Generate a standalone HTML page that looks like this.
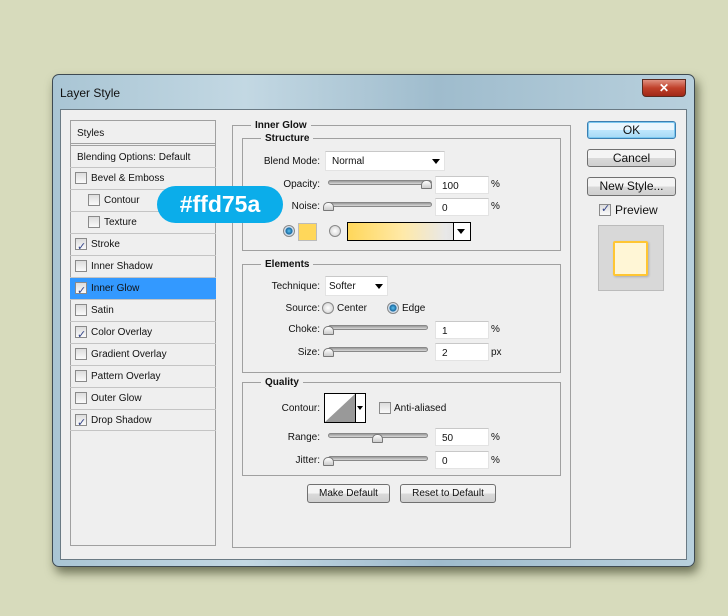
<!DOCTYPE html>
<html><head><style>
body{margin:0;width:728px;height:616px;background:#d7dbbc;position:relative;overflow:hidden;font-family:"Liberation Sans",Tahoma,sans-serif;font-size:10px;color:#111}
div,span{position:absolute;box-sizing:border-box}
.frame{left:52px;top:74px;width:643px;height:493px;border-radius:7px;background:linear-gradient(90deg,#a9c5d4,#c3d8e3 30%,#9fbccd 60%,#b8d0dd);border:1px solid #3e4a52;box-shadow:3px 6px 10px rgba(40,45,20,.6)}
.client{left:60px;top:109px;width:627px;height:451px;background:#efefef;border:1px solid #6a7a84}
.t{white-space:nowrap;line-height:15px}
.r{text-align:right}
.box{border:1px solid #a0a0a0}
.in{background:#fff;border:1px solid #e3e3e3;border-top-color:#c8c8c8;padding-left:6px;line-height:19px}
.sl{height:5px;border-radius:3px;background:linear-gradient(#9a9a9a,#d8d8d8);border:1px solid #888}
.th{width:11px;height:9px;background:linear-gradient(#fff,#ccc);border:1px solid #777;border-radius:5px 5px 1px 1px}
.cb{width:12px;height:12px;border:1px solid #8a8a8a;background:linear-gradient(#ddd,#fafafa)}
.rd{width:12px;height:12px;border-radius:50%;border:1px solid #888;background:radial-gradient(#fff,#ccc)}
.rd.on{background:radial-gradient(#5ac0f0 0,#1a6aa0 45%,#cde 55%,#eee)}
.btn{border:1px solid #707070;border-radius:3px;background:linear-gradient(#f4f4f4 50%,#dadada 50%,#cfcfcf);text-align:center;font-size:11px;line-height:17px}
.lab{background:#efefef;font-weight:bold;padding:0 4px}
.row{left:70px;width:146px;height:22px;border-top:1px solid #c4c4c4;padding-left:21px;line-height:22px}
.row .cb{left:5px;top:4px}
.ck::after{content:"✓";position:absolute;left:1px;top:-3px;font-size:11px;color:#334488}
.arr{width:0;height:0;border-left:4px solid transparent;border-right:4px solid transparent;border-top:5px solid #000}
</style></head><body>
<div class="frame"></div>
<div class="t" style="left:60px;top:86px;font-size:12px;line-height:15px">Layer Style</div>
<div style="left:642px;top:79px;width:44px;height:18px;border-radius:0 0 4px 4px;background:linear-gradient(#e09080,#c0402a 50%,#a02818);border:1px solid #5a2a20;color:#fff;text-align:center;font-weight:bold;font-size:12px;line-height:16px">✕</div>
<div class="client"></div>

<div class="box" style="left:70px;top:120px;width:146px;height:426px;background:#efefef"></div>
<div class="t" style="left:77px;top:126px">Styles</div>
<div style="left:71px;top:143px;width:144px;height:3px;border-top:1px solid #a0a0a0;border-bottom:1px solid #a0a0a0"></div>
<div class="t" style="left:77px;top:150px">Blending Options: Default</div>
<div class="row" style="top:167px"><span class="cb"></span>Bevel &amp; Emboss</div>
<div class="row" style="top:189px;padding-left:34px"><span class="cb" style="left:18px"></span>Contour</div>
<div class="row" style="top:211px;padding-left:34px"><span class="cb" style="left:18px"></span>Texture</div>
<div class="row" style="top:233px"><span class="cb ck"></span>Stroke</div>
<div class="row" style="top:255px"><span class="cb"></span>Inner Shadow</div>
<div class="row" style="top:277px;background:#3399ff"><span class="cb ck"></span>Inner Glow</div>
<div class="row" style="top:299px"><span class="cb"></span>Satin</div>
<div class="row" style="top:321px"><span class="cb ck"></span>Color Overlay</div>
<div class="row" style="top:343px"><span class="cb"></span>Gradient Overlay</div>
<div class="row" style="top:365px"><span class="cb"></span>Pattern Overlay</div>
<div class="row" style="top:387px"><span class="cb"></span>Outer Glow</div>
<div class="row" style="top:409px;border-bottom:1px solid #c4c4c4"><span class="cb ck"></span>Drop Shadow</div>

<div class="box" style="left:232px;top:125px;width:339px;height:423px"></div>
<div class="t lab" style="left:251px;top:118px">Inner Glow</div>
<div class="box" style="left:242px;top:138px;width:319px;height:113px"></div>
<div class="t lab" style="left:261px;top:131px">Structure</div>
<div class="t r" style="left:240px;width:80px;top:154px">Blend Mode:</div>
<div class="in" style="left:325px;top:151px;width:120px;height:20px;line-height:19px">Normal</div><div class="arr" style="left:432px;top:159px"></div>
<div class="t r" style="left:240px;width:80px;top:177px">Opacity:</div>
<div class="sl" style="left:328px;top:180px;width:104px"></div><div class="th" style="left:421px;top:180px"></div>
<div class="in" style="left:435px;top:176px;width:54px;height:18px">100</div><div class="t" style="left:491px;top:177px">%</div>
<div class="t r" style="left:240px;width:80px;top:199px">Noise:</div>
<div class="sl" style="left:328px;top:202px;width:104px"></div><div class="th" style="left:323px;top:202px"></div>
<div class="in" style="left:435px;top:198px;width:54px;height:18px">0</div><div class="t" style="left:491px;top:199px">%</div>
<div class="rd on" style="left:283px;top:225px"></div>
<div style="left:298px;top:223px;width:19px;height:18px;background:#ffd75a;border:1px solid #bbb"></div>
<div class="rd" style="left:329px;top:225px"></div>
<div style="left:347px;top:222px;width:124px;height:19px;border:1px solid #000;background:linear-gradient(90deg,#ffd75a,#ffe9a8 45%,#e8e8e8 80%,#ddd)"></div>
<div style="left:453px;top:223px;width:17px;height:17px;border-left:1px solid #000;background:#fff"></div><div class="arr" style="left:457px;top:229px"></div>

<div class="box" style="left:242px;top:264px;width:319px;height:109px"></div>
<div class="t lab" style="left:261px;top:257px">Elements</div>
<div class="t r" style="left:240px;width:80px;top:279px">Technique:</div>
<div class="in" style="left:325px;top:276px;width:63px;height:20px;line-height:19px;padding-left:3px">Softer</div><div class="arr" style="left:375px;top:284px"></div>
<div class="t r" style="left:240px;width:80px;top:301px">Source:</div>
<div class="rd" style="left:322px;top:302px"></div><div class="t" style="left:337px;top:301px">Center</div>
<div class="rd on" style="left:387px;top:302px"></div><div class="t" style="left:402px;top:301px">Edge</div>
<div class="t r" style="left:240px;width:80px;top:322px">Choke:</div>
<div class="sl" style="left:328px;top:325px;width:100px"></div><div class="th" style="left:323px;top:326px"></div>
<div class="in" style="left:435px;top:321px;width:54px;height:18px">1</div><div class="t" style="left:491px;top:322px">%</div>
<div class="t r" style="left:240px;width:80px;top:345px">Size:</div>
<div class="sl" style="left:328px;top:347px;width:100px"></div><div class="th" style="left:323px;top:348px"></div>
<div class="in" style="left:435px;top:343px;width:54px;height:18px">2</div><div class="t" style="left:491px;top:345px">px</div>

<div class="box" style="left:242px;top:382px;width:319px;height:94px"></div>
<div class="t lab" style="left:261px;top:375px">Quality</div>
<div class="t r" style="left:240px;width:80px;top:401px">Contour:</div>
<div style="left:324px;top:393px;width:42px;height:30px;border:1px solid #000;background:#fff"></div>
<svg style="position:absolute;left:325px;top:394px" width="30" height="28"><polygon points="0,28 30,0 30,28" fill="#999"/></svg>
<div style="left:355px;top:394px;width:1px;height:28px;background:#000"></div>
<div class="arr" style="left:357px;top:406px;border-left-width:3px;border-right-width:3px;border-top-width:4px"></div>
<div class="cb" style="left:379px;top:402px"></div><div class="t" style="left:394px;top:401px">Anti-aliased</div>
<div class="t r" style="left:240px;width:80px;top:430px">Range:</div>
<div class="sl" style="left:328px;top:433px;width:100px"></div><div class="th" style="left:372px;top:434px"></div>
<div class="in" style="left:435px;top:428px;width:54px;height:18px">50</div><div class="t" style="left:491px;top:430px">%</div>
<div class="t r" style="left:240px;width:80px;top:453px">Jitter:</div>
<div class="sl" style="left:328px;top:456px;width:100px"></div><div class="th" style="left:323px;top:457px"></div>
<div class="in" style="left:435px;top:451px;width:54px;height:18px">0</div><div class="t" style="left:491px;top:453px">%</div>
<div class="btn" style="left:307px;top:484px;width:83px;height:19px;font-size:10px">Make Default</div>
<div class="btn" style="left:400px;top:484px;width:96px;height:19px;font-size:10px">Reset to Default</div>

<div class="btn" style="left:587px;top:121px;width:89px;height:18px;border-color:#3c7fb1;background:linear-gradient(#eaf6fd 50%,#bee6fd 50%,#a7d9f5);box-shadow:inset 0 0 0 1px #7cc8f0;font-size:12px;line-height:16px">OK</div>
<div class="btn" style="left:587px;top:149px;width:89px;height:18px;font-size:12px;line-height:17px">Cancel</div>
<div class="btn" style="left:587px;top:177px;width:89px;height:19px;font-size:12px">New Style...</div>
<div class="cb ck" style="left:599px;top:204px"></div><div class="t" style="left:615px;top:203px;font-size:12px;line-height:15px">Preview</div>
<div style="left:598px;top:225px;width:66px;height:66px;background:#d8d8d8;border:1px solid #bbb"></div>
<div style="left:613px;top:241px;width:35px;height:35px;background:#fff6d6;border:2px solid #ffc633;border-radius:2px;box-shadow:1px 1px 2px rgba(0,0,0,.2)"></div>

<div style="left:157px;top:186px;width:126px;height:37px;border-radius:19px;background:#0badea;color:#fff;font-weight:bold;font-size:23px;line-height:37px;text-align:center">#ffd75a</div>
</body></html>
